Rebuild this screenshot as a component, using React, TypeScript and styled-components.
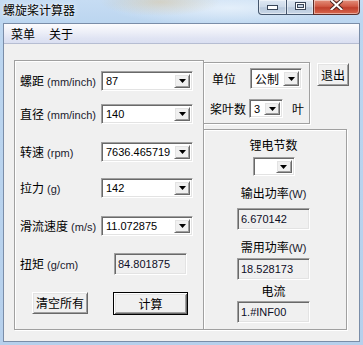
import React from 'react';
import styled, { createGlobalStyle, css } from 'styled-components';

const CJK = `"Noto Sans CJK SC", "Microsoft YaHei", sans-serif`;
const LATIN = `"Liberation Sans", "Noto Sans CJK SC", sans-serif`;

const Global = createGlobalStyle`
  html, body { margin: 0; padding: 0; background: #b9d1ea; }
  body { width: 363px; height: 345px; overflow: hidden; }
`;

const Window = styled.div`
  width: 363px;
  height: 345px;
  box-sizing: border-box;
  display: flex;
  flex-direction: column;
  padding: 0 3px 3px 3px;
  background:
    radial-gradient(ellipse 60px 14px at 160px 2px, rgba(214, 196, 160, 0.55), rgba(214, 196, 160, 0) 100%),
    radial-gradient(ellipse 120px 18px at 230px 8px, rgba(236, 244, 252, 0.8), rgba(236, 244, 252, 0) 100%),
    linear-gradient(180deg, #c6dcf3 0px, #bcd6f0 22px, #b6d0ec 100%);
`;

const TitleBar = styled.div`
  height: 23px;
  display: flex;
  justify-content: space-between;
  align-items: flex-start;
  flex-shrink: 0;
`;

const Title = styled.div`
  font: 12px/16px ${CJK};
  color: #000;
  margin-top: 2px;
  text-shadow: 0 0 6px rgba(255, 255, 255, 0.9), 0 0 2px rgba(255, 255, 255, 0.9);
`;

const Caption = styled.div`
  display: flex;
  height: 15px;
`;

type CapKind = 'min' | 'max' | 'close';

const CapButton = styled.div<{ $kind: CapKind }>`
  box-sizing: border-box;
  height: 100%;
  display: flex;
  justify-content: center;
  align-items: flex-start;
  border: 1px solid #45566d;
  border-top: none;
  box-shadow: inset 0 0 0 1px rgba(255, 255, 255, 0.45);
  ${(p) =>
    p.$kind === 'min' &&
    css`
      width: 29px;
      border-bottom-left-radius: 4px;
      padding-top: 5px;
      background: linear-gradient(180deg, #dfe8f3 0%, #ccd9e8 50%, #b9c9dc 55%, #c9d7e7 100%);
    `}
  ${(p) =>
    p.$kind === 'max' &&
    css`
      width: 28px;
      margin-left: -1px;
      padding-top: 2px;
      background: linear-gradient(180deg, #dfe8f3 0%, #ccd9e8 50%, #b9c9dc 55%, #c9d7e7 100%);
    `}
  ${(p) =>
    p.$kind === 'close' &&
    css`
      width: 47px;
      margin-left: -1px;
      border-color: #5a2e2a;
      border-bottom-right-radius: 4px;
      padding-top: 0;
      background: linear-gradient(180deg, #e2907c 0%, #d15a45 45%, #bf3f2c 55%, #d9684f 100%);
    `}
`;

const Client = styled.div`
  flex: 1;
  display: flex;
  flex-direction: column;
  border: 1px solid #7a8da8;
  min-height: 0;
`;

const MenuBar = styled.div`
  box-sizing: border-box;
  height: 20px;
  display: flex;
  align-items: center;
  border-bottom: 1px solid #b6bdd2;
  background: linear-gradient(180deg, #fcfcfe 0%, #eef0f8 40%, #e0e4f3 75%, #dadff1 100%);
`;

const MenuItem = styled.span`
  font: 12px/19px ${CJK};
  color: #000;
  padding: 0 7px;
`;

const Body = styled.div`
  flex: 1;
  background: #f0f0f0;
  display: flex;
  align-items: flex-start;
  padding: 16px 0 0 10px;
`;

const GroupBox = styled.div<{ $w: number; $h: number }>`
  box-sizing: border-box;
  width: ${(p) => p.$w}px;
  height: ${(p) => p.$h}px;
  border: 1px solid #a0a0a0;
  box-shadow: inset 1px 1px 0 #fff, 1px 1px 0 #fff;
  flex-shrink: 0;
`;

const LeftGroup = styled(GroupBox)`
  display: flex;
  flex-direction: column;
  padding: 10px 0 0 5px;
`;

const FieldRow = styled.div<{ $top: number; $h?: number }>`
  display: flex;
  align-items: center;
  height: ${(p) => p.$h ?? 20}px;
  margin-top: ${(p) => p.$top}px;
`;

const FieldLabel = styled.span<{ $w?: number; $indent?: number }>`
  width: ${(p) => p.$w ?? 81}px;
  flex-shrink: 0;
  font: 12px/14px ${CJK};
  color: #000;
  white-space: nowrap;
  margin-left: ${(p) => p.$indent ?? 0}px;
`;

const Unit = styled.span`
  font: 11px/14px ${LATIN};
  color: #1b1b2e;
`;

const sunken = css`
  border: 1px solid;
  border-color: #a0a0a0 #fff #fff #a0a0a0;
  box-shadow: inset 1px 1px 0 #696969, inset -1px -1px 0 #e3e3e3;
`;

const raised = css`
  border: 1px solid;
  border-color: #fff #696969 #696969 #fff;
  box-shadow: inset 1px 1px 0 #e3e3e3, inset -1px -1px 0 #a0a0a0;
  background: #f0f0f0;
`;

const Combo = styled.div<{ $w: number; $h?: number; $ml?: number }>`
  box-sizing: border-box;
  width: ${(p) => p.$w}px;
  height: ${(p) => p.$h ?? 20}px;
  margin-left: ${(p) => p.$ml ?? 0}px;
  flex-shrink: 0;
  display: flex;
  padding: 2px;
  background: #fff;
  ${sunken}
`;

const ComboText = styled.div<{ $cjk?: boolean }>`
  flex: 1;
  display: flex;
  align-items: center;
  padding-left: 2px;
  font: ${(p) => (p.$cjk ? `12px/14px ${CJK}` : `11px/14px ${LATIN}`)};
  color: #000;
  white-space: nowrap;
  overflow: hidden;
`;

const DropButton = styled.div`
  box-sizing: border-box;
  width: 16px;
  display: flex;
  align-items: center;
  justify-content: center;
  ${raised}
`;

const ReadOnlyBox = styled.div<{ $w: number; $h?: number; $ml?: number }>`
  box-sizing: border-box;
  width: ${(p) => p.$w}px;
  height: ${(p) => p.$h ?? 22}px;
  margin-left: ${(p) => p.$ml ?? 0}px;
  display: flex;
  align-items: center;
  padding-left: 3px;
  background: #f0f0f0;
  font: 11px/14px ${LATIN};
  color: #0d0d26;
  ${sunken}
`;

const ButtonRow = styled.div`
  display: flex;
  align-items: flex-start;
  margin-top: 17px;
  padding-left: 12px;
  gap: 25px;
`;

const Button = styled.div<{ $w: number; $h: number; $default?: boolean }>`
  box-sizing: border-box;
  width: ${(p) => p.$w}px;
  height: ${(p) => p.$h}px;
  display: flex;
  align-items: center;
  justify-content: center;
  font: 12px/14px ${CJK};
  color: #000;
  flex-shrink: 0;
  ${raised}
  ${(p) =>
    p.$default &&
    css`
      border: 1px solid #000;
      box-shadow: inset 1px 1px 0 #fff, inset -1px -1px 0 #696969, inset 2px 2px 0 #e3e3e3,
        inset -2px -2px 0 #a0a0a0;
    `}
`;

const RightColumn = styled.div`
  display: flex;
  flex-direction: column;
  margin-left: -1px;
  margin-top: 2px;
`;

const TopRow = styled.div`
  display: flex;
  align-items: flex-start;
`;

const UnitsGroup = styled(GroupBox)`
  display: flex;
  flex-direction: column;
  padding: 5px 0 0 8px;
`;

const PlainText = styled.span`
  font: 12px/14px ${CJK};
  color: #000;
  margin-left: 9px;
`;

const ExitButton = styled(Button)`
  margin-left: 7px;
  margin-top: 1px;
`;

const LowerGroup = styled(GroupBox)`
  margin-top: 5px;
  display: flex;
  flex-direction: column;
  align-items: center;
  padding: 8px 3px 0 0;
`;

const CenterLabel = styled.div<{ $top: number }>`
  font: 12px/14px ${CJK};
  color: #000;
  margin-top: ${(p) => p.$top}px;
  white-space: nowrap;
`;

const Spaced = styled.div<{ $top: number }>`
  margin-top: ${(p) => p.$top}px;
`;

const Arrow = () => (
  <svg width="7" height="4" viewBox="0 0 7 4">
    <path d="M0 0h7L3.5 4z" fill="#000" />
  </svg>
);

const ComboBox = ({
  value,
  w,
  h,
  ml,
  cjk,
}: {
  value: string;
  w: number;
  h?: number;
  ml?: number;
  cjk?: boolean;
}) => (
  <Combo $w={w} $h={h} $ml={ml}>
    <ComboText $cjk={cjk}>{value}</ComboText>
    <DropButton>
      <Arrow />
    </DropButton>
  </Combo>
);

const MinGlyph = () => (
  <svg width="11" height="5" viewBox="0 0 11 5">
    <rect x="0.5" y="0.5" width="10" height="4" fill="#fff" stroke="#3a4658" />
  </svg>
);

const MaxGlyph = () => (
  <svg width="11" height="8" viewBox="0 0 11 8">
    <rect x="0.5" y="0.5" width="10" height="7" fill="#fff" stroke="#3a4658" />
    <rect x="2.5" y="2.5" width="6" height="3" fill="#c8d5e5" stroke="#3a4658" />
  </svg>
);

const CloseGlyph = () => (
  <svg width="13" height="10" viewBox="0 0 13 10">
    <path d="M1.5 0.5 L11.5 9.5 M11.5 0.5 L1.5 9.5" stroke="#4a2520" strokeWidth="4" strokeLinecap="square" />
    <path d="M1.5 0.5 L11.5 9.5 M11.5 0.5 L1.5 9.5" stroke="#fff" strokeWidth="2" strokeLinecap="square" />
  </svg>
);

const fields = [
  { cjk: '螺距', unit: ' (mm/inch)', value: '87', top: 0 },
  { cjk: '直径', unit: ' (mm/inch)', value: '140', top: 13 },
  { cjk: '转速', unit: ' (rpm)', value: '7636.465719', top: 18 },
  { cjk: '拉力', unit: ' (g)', value: '142', top: 16 },
  { cjk: '滑流速度', unit: ' (m/s)', value: '11.072875', top: 18 },
];

export default function App() {
  return (
    <>
      <Global />
      <Window>
        <TitleBar>
          <Title>螺旋桨计算器</Title>
          <Caption>
            <CapButton $kind="min">
              <MinGlyph />
            </CapButton>
            <CapButton $kind="max">
              <MaxGlyph />
            </CapButton>
            <CapButton $kind="close">
              <CloseGlyph />
            </CapButton>
          </Caption>
        </TitleBar>
        <Client>
          <MenuBar>
            <MenuItem>菜单</MenuItem>
            <MenuItem>关于</MenuItem>
          </MenuBar>
          <Body>
            <LeftGroup $w={190} $h={270}>
              {fields.map((f) => (
                <FieldRow key={f.cjk} $top={f.top}>
                  <FieldLabel>
                    {f.cjk}
                    <Unit>{f.unit}</Unit>
                  </FieldLabel>
                  <ComboBox value={f.value} w={92} />
                </FieldRow>
              ))}
              <FieldRow $top={17} $h={22}>
                <FieldLabel>
                  扭矩<Unit> (g/cm)</Unit>
                </FieldLabel>
                <ReadOnlyBox $w={73} $ml={13}>
                  84.801875
                </ReadOnlyBox>
              </FieldRow>
              <ButtonRow>
                <Button $w={56} $h={22}>
                  清空所有
                </Button>
                <Button $w={75} $h={23} $default>
                  计算
                </Button>
              </ButtonRow>
            </LeftGroup>
            <RightColumn>
              <TopRow>
                <UnitsGroup $w={107} $h={62}>
                  <FieldRow $top={0} $h={21}>
                    <FieldLabel $w={38}>单位</FieldLabel>
                    <ComboBox value="公制" w={52} h={21} cjk />
                  </FieldRow>
                  <FieldRow $top={10} $h={19}>
                    <FieldLabel $w={39} $indent={-2}>
                      桨叶数
                    </FieldLabel>
                    <ComboBox value="3" w={34} h={19} />
                    <PlainText>叶</PlainText>
                  </FieldRow>
                </UnitsGroup>
                <ExitButton $w={32} $h={23}>
                  退出
                </ExitButton>
              </TopRow>
              <LowerGroup $w={144} $h={201}>
                <CenterLabel $top={0}>锂电节数</CenterLabel>
                <Spaced $top={5}>
                  <ComboBox value="" w={42} h={19} />
                </Spaced>
                <CenterLabel $top={10}>
                  输出功率<Unit>(W)</Unit>
                </CenterLabel>
                <Spaced $top={7}>
                  <ReadOnlyBox $w={73}>6.670142</ReadOnlyBox>
                </Spaced>
                <CenterLabel $top={10}>
                  需用功率<Unit>(W)</Unit>
                </CenterLabel>
                <Spaced $top={3}>
                  <ReadOnlyBox $w={73}>18.528173</ReadOnlyBox>
                </Spaced>
                <CenterLabel $top={4}>电流</CenterLabel>
                <Spaced $top={3}>
                  <ReadOnlyBox $w={73}>1.#INF00</ReadOnlyBox>
                </Spaced>
              </LowerGroup>
            </RightColumn>
          </Body>
        </Client>
      </Window>
    </>
  );
}
